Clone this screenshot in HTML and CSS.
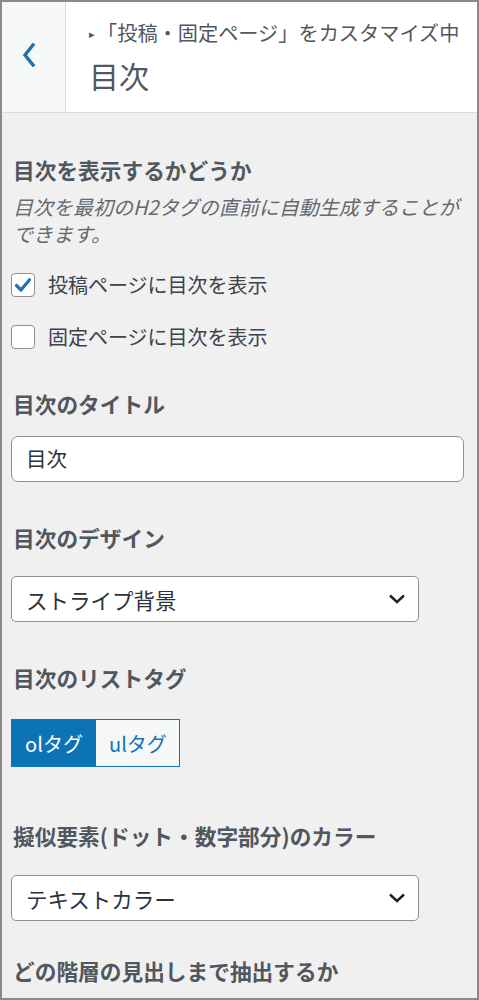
FILE: index.html
```html
<!DOCTYPE html>
<html lang="ja">
<head>
<meta charset="utf-8">
<title>目次</title>
<link rel="stylesheet" href="styles.css">
</head>
<body>
<div class="frame">
  <header class="head">
    <div class="back">
      <svg class="back-icon" width="14" height="24" viewBox="0 0 14 24"><path d="M11 2 L3 12 L11 22" fill="none" stroke="#2271b1" stroke-width="3.4" stroke-linecap="square"/></svg>
    </div>
    <div class="head-text">
      <div class="crumb"><span class="tri">▸</span>「投稿・固定ページ」をカスタマイズ中</div>
      <div class="title">目次</div>
    </div>
  </header>
  <main class="body">
    <section class="sec sec-show">
      <div class="label">目次を表示するかどうか</div>
      <div class="desc">目次を最初のH2タグの直前に自動生成することができます。</div>
      <div class="check-row first">
        <span class="box checked"><svg width="22" height="22" viewBox="0 0 22 22"><path d="M4.5 11.5 L9 16 L17.5 5.8" fill="none" stroke="#2271b1" stroke-width="3.2" stroke-linecap="round" stroke-linejoin="round"/></svg></span>
        <span class="check-label">投稿ページに目次を表示</span>
      </div>
      <div class="check-row second">
        <span class="box"></span>
        <span class="check-label">固定ページに目次を表示</span>
      </div>
    </section>
    <section class="sec sec-title">
      <div class="label">目次のタイトル</div>
      <div class="input">目次</div>
    </section>
    <section class="sec sec-design">
      <div class="label">目次のデザイン</div>
      <div class="select"><span>ストライプ背景</span><svg class="chev" width="18" height="10" viewBox="0 0 18 10"><path d="M2 1.5 L9 8 L16 1.5" fill="none" stroke="#1d2327" stroke-width="2.4"/></svg></div>
    </section>
    <section class="sec sec-list">
      <div class="label">目次のリストタグ</div>
      <div class="toggle">
        <span class="tbtn active">olタグ</span><span class="tbtn">ulタグ</span>
      </div>
    </section>
    <section class="sec sec-color">
      <div class="label">擬似要素(ドット・数字部分)のカラー</div>
      <div class="select"><span>テキストカラー</span><svg class="chev" width="18" height="10" viewBox="0 0 18 10"><path d="M2 1.5 L9 8 L16 1.5" fill="none" stroke="#1d2327" stroke-width="2.4"/></svg></div>
    </section>
    <section class="sec sec-depth">
      <div class="label">どの階層の見出しまで抽出するか</div>
    </section>
  </main>
</div>
</body>
</html>
```

FILE: styles.css
```css
html, body {
  margin: 0;
  padding: 0;
}
body {
  font-family: "Noto Sans CJK JP", "Noto Sans", sans-serif;
  background: #f0f0f1;
}
.frame {
  width: 479px;
  height: 1000px;
  box-sizing: border-box;
  border: 2px solid #8a8a8a;
  background: #f0f0f1;
  overflow: hidden;
}
.head {
  display: flex;
  height: 110px;
  border-bottom: 1px solid #dcdcde;
  background: #fff;
}
.back {
  width: 64px;
  flex: none;
  background: #f6f7f7;
  border-right: 1px solid #dcdcde;
  display: flex;
  align-items: flex-start;
  padding-left: 20px;
  padding-top: 41px;
  box-sizing: border-box;
}
.head-text {
  padding-left: 23px;
  padding-top: 18px;
  color: #50575e;
}
.crumb {
  font-size: 20.2px;
  line-height: 26px;
  white-space: nowrap;
}
.tri {
  font-size: 11px;
  display: inline-block;
  width: 8px;
  vertical-align: 3px;
}
.title {
  font-size: 30px;
  line-height: 40px;
  margin-top: 9px;
}
.body {
  padding: 0 13px 0 9px;
}
.label {
  font-size: 21.7px;
  font-weight: 700;
  line-height: 28px;
  color: #50575e;
  padding-left: 2px;
  white-space: nowrap;
}
.sec-show { padding-top: 43px; }
.desc {
  margin-top: 9px;
  font-size: 20px;
  line-height: 27px;
  font-style: italic;
  color: #646970;
  padding-left: 2px;
}
.check-row {
  display: flex;
  align-items: center;
  gap: 13px;
}
.check-row.first { margin-top: 24px; }
.check-row.second { margin-top: 24px; }
.box {
  width: 24px;
  height: 24px;
  box-sizing: border-box;
  border: 1.5px solid #8c8f94;
  border-radius: 4px;
  background: #fff;
  display: flex;
  align-items: center;
  justify-content: center;
  flex: none;
}
.check-label {
  font-size: 20px;
  line-height: 28px;
  color: #3c434a;
}
.sec-title { margin-top: 39px; }
.input {
  margin-top: 18px;
  height: 46px;
  box-sizing: border-box;
  border: 1.5px solid #8c8f94;
  border-radius: 7px;
  background: #fff;
  font-size: 20.5px;
  line-height: 43px;
  padding-left: 14px;
  color: #2c3338;
}
.sec-design { margin-top: 42px; }
.select {
  margin-top: 24px;
  width: 408px;
  height: 46px;
  box-sizing: border-box;
  border: 1.5px solid #8c8f94;
  border-radius: 5px;
  background: #fff;
  display: flex;
  align-items: center;
  justify-content: space-between;
  padding: 0 12px 0 14px;
  font-size: 21.5px;
  color: #2c3338;
}
.sec-list { margin-top: 42px; }
.toggle {
  margin-top: 27px;
  display: inline-flex;
  border: 1.5px solid #1274b8;
  height: 48px;
  box-sizing: border-box;
}
.tbtn {
  display: flex;
  align-items: center;
  padding: 0 12px 0 13px;
  font-size: 20px;
  color: #1274b8;
  background: #f6f7f7;
}
.tbtn.active {
  background: #0b73b6;
  color: #fff;
  width: 84px;
  box-sizing: border-box;
  justify-content: center;
  padding: 0;
}
.sec-color { margin-top: 55px; }
.sec-color .select { margin-top: 25px; }
.sec-depth { margin-top: 36px; }
```
